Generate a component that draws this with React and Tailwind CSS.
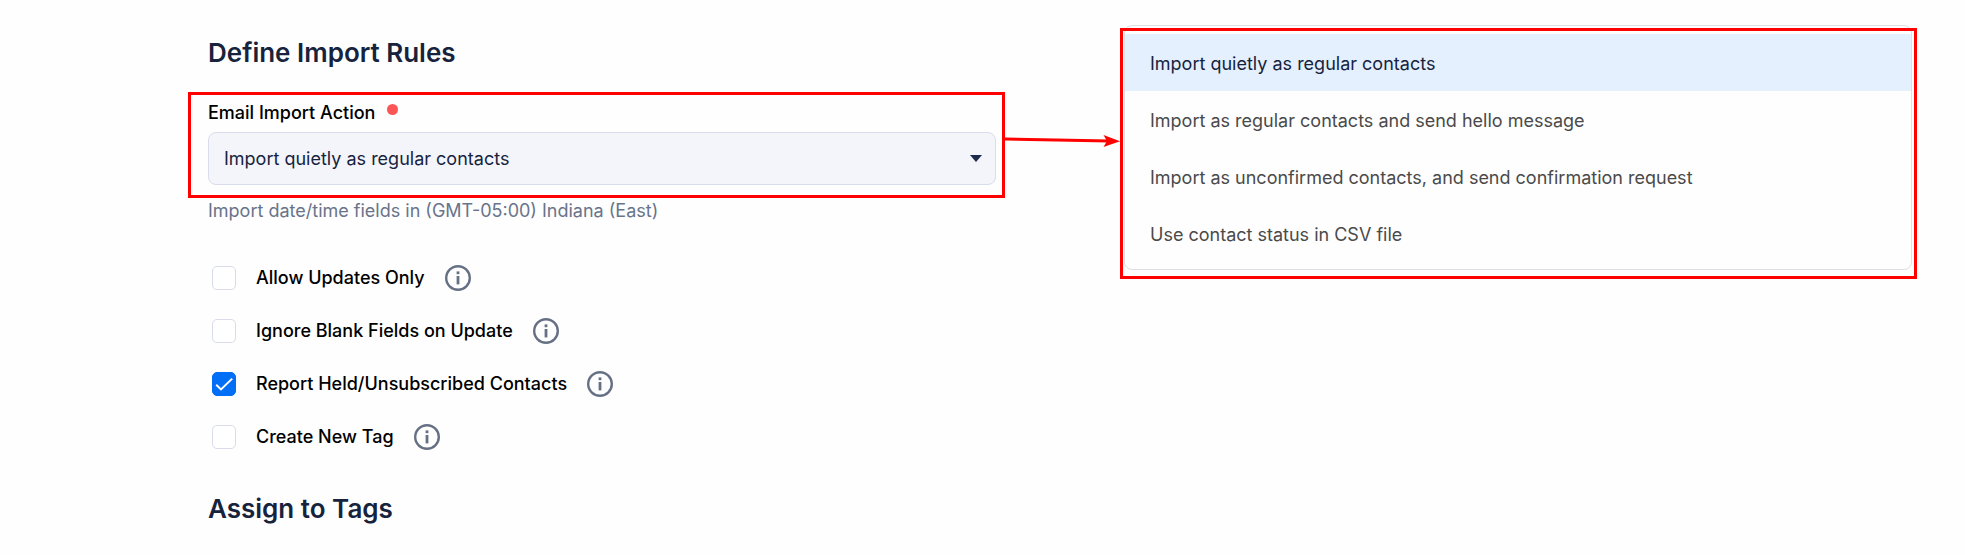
import React, { useState } from 'react';

const IMPORT_ACTIONS = [
  { value: 'quiet', label: 'Import quietly as regular contacts' },
  { value: 'hello', label: 'Import as regular contacts and send hello message' },
  { value: 'unconfirmed', label: 'Import as unconfirmed contacts, and send confirmation request' },
  { value: 'csv', label: 'Use contact status in CSV file' },
];

const RULES = [
  { id: 'updates-only', label: 'Allow Updates Only' },
  { id: 'ignore-blank', label: 'Ignore Blank Fields on Update' },
  { id: 'report-held', label: 'Report Held/Unsubscribed Contacts' },
  { id: 'create-tag', label: 'Create New Tag' },
];

const InfoIcon = () => (
  <svg className="h-[26px] w-[26px]" viewBox="0 0 26 26" fill="none" aria-hidden="true">
    <circle cx="13" cy="13" r="11.8" stroke="#667085" strokeWidth="2.4" />
    <rect x="11.6" y="6.4" width="2.8" height="2.8" fill="#667085" />
    <rect x="11.6" y="11" width="2.8" height="8.4" fill="#667085" />
  </svg>
);

const RuleCheckbox = ({ id, label, checked, onChange }) => (
  <div className="flex h-[53px] items-center">
    <span className="relative ml-1 flex">
      <input
        id={id}
        type="checkbox"
        checked={checked}
        onChange={onChange}
        className="h-6 w-6 appearance-none rounded-[5px] border border-[#d9dcea] bg-white checked:border-[#006ff5] checked:bg-[#006ff5]"
      />
      {checked && (
        <svg className="pointer-events-none absolute inset-0 h-6 w-6" viewBox="0 0 24 24" fill="none">
          <path d="M4.2 12.8 9 17.4 20.2 6.6" stroke="#fff" strokeWidth="2" />
        </svg>
      )}
    </span>
    <label htmlFor={id} className="ml-5 text-[18px] leading-6 font-medium text-black">
      {label}
    </label>
    <button type="button" aria-label={`About ${label}`} className="ml-5">
      <InfoIcon />
    </button>
  </div>
);

const ActionMenu = ({ selected, onSelect }) => (
  <div className="relative mt-[25px] self-start rounded-lg border border-[#dcdfe8] pt-2 pb-[7px]">
    <ul role="listbox" aria-label="Email Import Action options">
      {IMPORT_ACTIONS.map((action) => (
        <li key={action.value} role="option" aria-selected={action.value === selected}>
          <button
            type="button"
            onClick={() => onSelect(action.value)}
            className={`flex h-[57px] w-full items-center px-[25px] pt-0.5 text-left text-[18px] ${
              action.value === selected ? 'bg-[#e4f0fd] text-[#17233d]' : 'text-[#4a4a4a]'
            }`}
          >
            {action.label}
          </button>
        </li>
      ))}
    </ul>
    {/* Callout frame */}
    <div className="pointer-events-none absolute top-[2px] -right-[6px] -bottom-[10px] -left-[5px] border-3 border-[#ff0000]" />
  </div>
);

const App = () => {
  const [action, setAction] = useState('quiet');
  const [rules, setRules] = useState({ 'report-held': true });

  const toggleRule = (id) => setRules((prev) => ({ ...prev, [id]: !prev[id] }));

  return (
    <main className="grid min-h-screen grid-cols-2 gap-32 bg-[#fefefe] pr-[53px] pl-52 font-['Inter',sans-serif] text-[18px]">
      <form>
        <h2 className="mt-[35px] text-[26px] leading-9 font-semibold text-[#17233d]">Define Import Rules</h2>

        <div className="relative mt-6 pt-1">
          <div className="mb-[5px] flex h-7 items-center">
            <label htmlFor="import-action" className="leading-6 font-medium text-black">
              Email Import Action
            </label>
            <span className="mb-2 ml-3 h-[11px] w-[11px] rounded-full bg-[#fc5555]" />
          </div>
          <div className="relative">
            <select
              id="import-action"
              value={action}
              onChange={(e) => setAction(e.target.value)}
              className="block h-[53px] w-full appearance-none rounded-lg border border-[#d9dcea] bg-[#f4f5fa] px-[15px] text-[18px] text-[#17233d]"
            >
              {IMPORT_ACTIONS.map((item) => (
                <option key={item.value} value={item.value}>
                  {item.label}
                </option>
              ))}
            </select>
            <svg className="pointer-events-none absolute top-[23px] right-3.5 h-[7px] w-3" viewBox="0 0 12 7">
              <path d="M0 0h12L6 7z" fill="#1c2b4b" />
            </svg>
          </div>
          {/* Callout frame with an arrow to the open menu */}
          <div className="pointer-events-none absolute -top-[3px] -right-[9px] -bottom-[13px] -left-5 border-3 border-[#ff0000]" />
          <svg className="absolute top-[38px] left-full ml-[9px] h-3.5 w-[115px]" viewBox="0 0 115 14" fill="none">
            <path d="M0 6 104 8" stroke="#f00" strokeWidth="3" />
            <path d="M98.500 2 115 8.200 98.500 14 102 8z" fill="#f00" />
          </svg>
        </div>

        <p className="mt-3 leading-7 text-[#69748a]">Import date/time fields in (GMT-05:00) Indiana (East)</p>

        <div className="mt-[26px]">
          {RULES.map((rule) => (
            <RuleCheckbox
              key={rule.id}
              id={rule.id}
              label={rule.label}
              checked={Boolean(rules[rule.id])}
              onChange={() => toggleRule(rule.id)}
            />
          ))}
        </div>

        <h2 className="mt-7 text-[26px] leading-9 font-semibold text-[#17233d]">Assign to Tags</h2>
      </form>

      <ActionMenu selected={action} onSelect={setAction} />
    </main>
  );
};

export default App;
